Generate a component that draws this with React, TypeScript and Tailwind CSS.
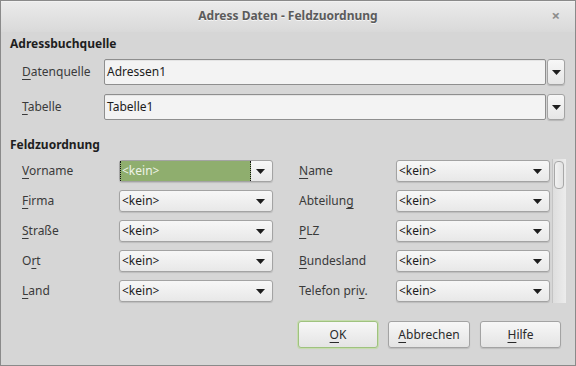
import React from 'react';

type Field = { label: string; key: number };

const leftFields: Field[] = [
  { label: 'Vorname', key: 0 },
  { label: 'Firma', key: 0 },
  { label: 'Straße', key: 0 },
  { label: 'Ort', key: 1 },
  { label: 'Land', key: 0 },
];

const rightFields: Field[] = [
  { label: 'Name', key: 0 },
  { label: 'Abteilung', key: 8 },
  { label: 'PLZ', key: 0 },
  { label: 'Bundesland', key: 0 },
  { label: 'Telefon priv.', key: 11 },
];

// label with an underlined access key letter
const Mnemonic: React.FC<{ text: string; at: number }> = ({ text, at }) => (
  <span>
    {text.slice(0, at)}
    <span className="underline decoration-1 underline-offset-[3px]">{text.charAt(at)}</span>
    {text.slice(at + 1)}
  </span>
);

const Arrow: React.FC = () => (
  <svg width="9" height="5" viewBox="0 0 9 5">
    <polygon points="0,0 9,0 4.5,5" fill="#1e1e1e" />
  </svg>
);

const Combo: React.FC<{ focused?: boolean }> = ({ focused }) => (
  <div className="flex h-[22px] w-[154px] items-stretch rounded-[3px] border border-[#a3a3a3] bg-gradient-to-b from-[#f7f7f7] to-[#e8e8e8] shadow-[0_1px_1px_rgba(0,0,0,0.12)]">
    {focused ? (
      <div className="flex w-[132px] items-center border-x border-dotted border-x-[#111] bg-[#8fae6e] pl-[1px] text-[#eef3e8]">
        &lt;kein&gt;
      </div>
    ) : (
      <div className="flex flex-1 items-center pl-[2px] text-[#1c1c1c]">&lt;kein&gt;</div>
    )}
    <div className="ml-auto flex w-[21px] items-center justify-center pr-[2px]">
      <Arrow />
    </div>
  </div>
);

const FieldCell: React.FC<{ field: Field; focused?: boolean }> = ({ field, focused }) => (
  <div className="flex h-[22px] items-center">
    <div className="w-[97px] text-[#3a3a3a]">
      <Mnemonic text={field.label} at={field.key} />
    </div>
    <Combo focused={focused} />
  </div>
);

const SourceRow: React.FC<{ label: string; value: string }> = ({ label, value }) => (
  <div className="flex h-[26px] items-stretch">
    <div className="flex w-[82px] items-center text-[#3a3a3a]">
      <Mnemonic text={label} at={0} />
    </div>
    <div className="flex w-[442px] items-center rounded-[2px] border border-[#8e8e8e] bg-[#f3f3f3] pl-[2px] text-[#1c1c1c] shadow-[inset_0_1px_0_rgba(0,0,0,0.06)]">
      {value}
    </div>
    <div className="ml-[1px] flex w-[18px] items-center justify-center rounded-[3px] border border-[#a3a3a3] bg-gradient-to-b from-[#f7f7f7] to-[#e6e6e6] shadow-[0_1px_1px_rgba(0,0,0,0.15)]">
      <Arrow />
    </div>
  </div>
);

const DialogButton: React.FC<{ text: string; at: number; width: string; isDefault?: boolean }> = ({
  text,
  at,
  width,
  isDefault,
}) => (
  <div
    className={`flex h-[27px] items-center justify-center rounded-[3px] border bg-gradient-to-b from-[#f7f7f7] to-[#e4e4e4] text-[#2a2a2a] shadow-[0_1px_1px_rgba(0,0,0,0.12)] ${width} ${
      isDefault ? 'border-[#9fc27f] ring-1 ring-[#c6dcae]' : 'border-[#a3a3a3]'
    }`}
  >
    <Mnemonic text={text} at={at} />
  </div>
);

const App: React.FC = () => {
  return (
    <div
      className="flex h-[366px] w-[576px] flex-col border border-[#8a8a8a] bg-[#d6d6d6] text-[12px] leading-[18px]"
      style={{ fontFamily: '"Noto Sans", "Open Sans", sans-serif' }}
    >
      {/* title bar */}
      <div className="relative flex h-[31px] items-center justify-center border-t border-t-[#f2f2f2] bg-gradient-to-b from-[#ebebeb] to-[#d9d9d9] pb-[2px]">
        <span className="text-[12px] font-bold text-[#5b5b5b] [text-shadow:0_1px_0_#f5f5f5]">
          Adress Daten - Feldzuordnung
        </span>
        <span className="absolute right-[15px] top-[4px] text-[15px] font-bold text-[#8c8c8c]">×</span>
      </div>

      <div className="mt-[3px] pl-[9px] font-bold text-[#1e1e1e]">Adressbuchquelle</div>

      <div className="mt-[6px] flex flex-col gap-[9px] pl-[21px]">
        <SourceRow label="Datenquelle" value="Adressen1" />
        <SourceRow label="Tabelle" value="Tabelle1" />
      </div>

      <div className="mt-[16px] pl-[9px] font-bold text-[#1e1e1e]">Feldzuordnung</div>

      <div className="mt-[5px] flex h-[144px] pl-[21px]">
        <div className="flex gap-[26px] pt-[1px]">
          <div className="flex flex-col gap-[8px]">
            {leftFields.map((f, i) => (
              <FieldCell key={f.label} field={f} focused={i === 0} />
            ))}
          </div>
          <div className="flex flex-col gap-[8px]">
            {rightFields.map((f) => (
              <FieldCell key={f.label} field={f} />
            ))}
          </div>
        </div>
        <div className="ml-[2px] flex w-[14px] flex-col border-l border-[#c4c4c4] bg-gradient-to-r from-[#dedede] to-[#ececec] px-[1px] pt-[2px]">
          <div className="h-[28px] w-[10px] rounded-[4px] border border-[#a8a8a8] bg-gradient-to-r from-[#f2f2f2] to-[#e2e2e2]" />
        </div>
      </div>

      <div className="mt-[18px] flex justify-end gap-[10px] pr-[14px]">
        <DialogButton text="OK" at={0} width="w-[80px]" isDefault />
        <DialogButton text="Abbrechen" at={0} width="w-[82px]" />
        <DialogButton text="Hilfe" at={0} width="w-[81px]" />
      </div>
    </div>
  );
};

export default App;
